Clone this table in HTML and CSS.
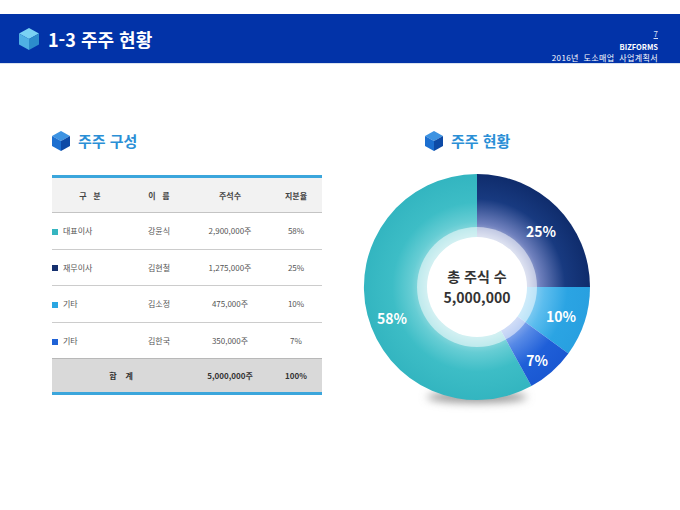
FILE: index.html
```html
<!DOCTYPE html>
<html lang="ko">
<head>
<meta charset="utf-8">
<title>1-3 주주 현황</title>
<link rel="stylesheet" href="styles.css">
</head>
<body>
<div class="page">
  <header class="topbar">
    <div class="brand">
      <svg class="cube cube-lg" viewBox="0 0 22 24" aria-hidden="true">
        <polygon points="11,1 21,6.5 11,12 1,6.5" fill="#7ad2f3"/>
        <polygon points="1,6.5 11,12 11,23 1,17.5" fill="#4fb0e4"/>
        <polygon points="21,6.5 11,12 11,23 21,17.5" fill="#2c8ccc"/>
      </svg>
      <h1 class="title">1-3 주주 현황</h1>
    </div>
    <div class="meta">
      <span class="pageno">7</span>
      <span class="company">BIZFORMS</span>
      <span class="doc">2016년 도소매업 사업계획서</span>
    </div>
  </header>

  <main class="content">
    <section class="panel panel-left">
      <div class="sec-title">
        <svg class="cube" viewBox="0 0 20 22" aria-hidden="true">
          <polygon points="10,1 19,6 10,11 1,6" fill="#3d93e2"/>
          <polygon points="1,6 10,11 10,21 1,16" fill="#1c6fd0"/>
          <polygon points="19,6 10,11 10,21 19,16" fill="#0d4aa6"/>
        </svg>
        <h2>주주 구성</h2>
      </div>
      <table class="share-table">
        <colgroup>
          <col class="c1"><col class="c2"><col class="c3"><col class="c4">
        </colgroup>
        <thead>
          <tr><th>구&nbsp;&nbsp;&nbsp;분</th><th>이&nbsp;&nbsp;&nbsp;름</th><th>주석수</th><th>지분율</th></tr>
        </thead>
        <tbody>
          <tr><td class="lbl"><i class="mk mk-teal"></i>대표이사</td><td>강윤식</td><td>2,900,000주</td><td>58%</td></tr>
          <tr><td class="lbl"><i class="mk mk-navy"></i>재무이사</td><td>김현철</td><td>1,275,000주</td><td>25%</td></tr>
          <tr><td class="lbl"><i class="mk mk-sky"></i>기타</td><td>김소정</td><td>475,000주</td><td>10%</td></tr>
          <tr><td class="lbl"><i class="mk mk-blue"></i>기타</td><td>김한국</td><td>350,000주</td><td>7%</td></tr>
        </tbody>
        <tfoot>
          <tr><td colspan="2">합&nbsp;&nbsp;&nbsp;&nbsp;계</td><td>5,000,000주</td><td>100%</td></tr>
        </tfoot>
      </table>
    </section>

    <section class="panel panel-right">
      <div class="sec-title sec-title-right">
        <svg class="cube" viewBox="0 0 20 22" aria-hidden="true">
          <polygon points="10,1 19,6 10,11 1,6" fill="#3d93e2"/>
          <polygon points="1,6 10,11 10,21 1,16" fill="#1c6fd0"/>
          <polygon points="19,6 10,11 10,21 19,16" fill="#0d4aa6"/>
        </svg>
        <h2>주주 현황</h2>
      </div>
      <svg class="donut" viewBox="0 0 240 246" width="240" height="246">
        <defs>
          <radialGradient id="gNavy" gradientUnits="userSpaceOnUse" cx="120" cy="120" r="113">
            <stop offset="0.45" stop-color="#b7c0e0"/>
            <stop offset="0.56" stop-color="#6f80bd"/>
            <stop offset="0.78" stop-color="#183a80"/>
            <stop offset="1" stop-color="#0f2c6c"/>
          </radialGradient>
          <radialGradient id="gSky" gradientUnits="userSpaceOnUse" cx="120" cy="120" r="113">
            <stop offset="0.45" stop-color="#9ad6f5"/>
            <stop offset="0.6" stop-color="#5cbdee"/>
            <stop offset="0.8" stop-color="#2ba4e3"/>
            <stop offset="1" stop-color="#28a0e0"/>
          </radialGradient>
          <radialGradient id="gBlue" gradientUnits="userSpaceOnUse" cx="120" cy="120" r="113">
            <stop offset="0.45" stop-color="#9fb8ef"/>
            <stop offset="0.6" stop-color="#5689e6"/>
            <stop offset="0.8" stop-color="#1f5fd8"/>
            <stop offset="1" stop-color="#1a58d2"/>
          </radialGradient>
          <radialGradient id="gTeal" gradientUnits="userSpaceOnUse" cx="120" cy="120" r="113">
            <stop offset="0.45" stop-color="#a2e0e4"/>
            <stop offset="0.58" stop-color="#66cdd4"/>
            <stop offset="0.75" stop-color="#3dbdc6"/>
            <stop offset="1" stop-color="#33b5c0"/>
          </radialGradient>
          <filter id="blur" x="-30%" y="-100%" width="160%" height="300%">
            <feGaussianBlur stdDeviation="4"/>
          </filter>
        </defs>
        <ellipse cx="120" cy="230" rx="50" ry="6" fill="#999999" filter="url(#blur)"/>
        <path d="M120 120 L174.4 219 A113 113 0 1 1 120 7 Z" fill="url(#gTeal)"/>
        <path d="M120 120 L120 7 A113 113 0 0 1 233 120 Z" fill="url(#gNavy)"/>
        <path d="M120 120 L233 120 A113 113 0 0 1 211.4 186.4 Z" fill="url(#gSky)"/>
        <path d="M120 120 L211.4 186.4 A113 113 0 0 1 174.4 219 Z" fill="url(#gBlue)"/>
        <circle cx="120" cy="120" r="60" fill="#ffffff" fill-opacity="0.5"/>
        <circle cx="120" cy="120" r="50" fill="#ffffff"/>
        <text class="seg" x="184" y="64">25%</text>
        <text class="seg" x="204" y="149">10%</text>
        <text class="seg" x="180" y="193">7%</text>
        <text class="seg" x="35" y="151">58%</text>
        <text class="center" x="120" y="109">총 주식 수</text>
        <text class="center" x="120" y="129.5">5,000,000</text>
      </svg>
    </section>
  </main>
</div>
</body>
</html>
```

FILE: styles.css
```css
* { box-sizing: border-box; }

html, body {
  margin: 0;
  padding: 0;
  background: #ffffff;
}

body {
  font-family: "Noto Sans CJK KR", "Noto Sans", "Liberation Sans", sans-serif;
  color: #555555;
}

.page {
  width: 680px;
  height: 510px;
  overflow: hidden;
  background: #ffffff;
}

/* ---------- top bar ---------- */
.topbar {
  margin-top: 14px;
  height: 50px;
  background: #0233a8;
  border-bottom: 1px solid #d9e2ef;
  display: flex;
  justify-content: space-between;
  padding: 0 22px 0 18px;
}

.brand {
  display: flex;
  align-items: center;
  gap: 8px;
}

.cube {
  width: 20px;
  height: 22px;
  display: block;
  flex: none;
}

.cube-lg {
  width: 22px;
  height: 24px;
}

.title {
  margin: 0;
  color: #ffffff;
  font-size: 18px;
  font-weight: 700;
  line-height: 24px;
}

.meta {
  display: flex;
  flex-direction: column;
  align-items: flex-end;
  padding-top: 14px;
  color: #ffffff;
  font-size: 8px;
  line-height: 11px;
}

.pageno {
  text-decoration: underline;
  color: #d6def5;
}

.company {
  margin-top: 2px;
  font-weight: 700;
  font-size: 7.5px;
}

.doc {
  letter-spacing: 0.4px;
  word-spacing: 2px;
}

/* ---------- content ---------- */
.content {
  display: flex;
  gap: 35px;
  padding-top: 66px;
  padding-left: 52px;
}

.panel-left {
  width: 270px;
}

.panel-right {
  width: 240px;
}

.sec-title {
  display: flex;
  align-items: center;
  gap: 7px;
  height: 22px;
  margin-left: -1px;
}

.sec-title h2 {
  margin: 0;
  font-size: 15px;
  font-weight: 700;
  color: #2b8fd6;
  line-height: 22px;
}

.sec-title-right {
  padding-left: 68px;
}

/* ---------- table ---------- */
.share-table {
  margin-top: 23px;
  width: 270px;
  border-collapse: collapse;
  table-layout: fixed;
  font-size: 8px;
  border-top: 3px solid #3ba6dc;
  border-bottom: 3px solid #3ba6dc;
}

.share-table col.c1 { width: 76px; }
.share-table col.c2 { width: 62px; }
.share-table col.c3 { width: 80px; }
.share-table col.c4 { width: 52px; }

.share-table th {
  height: 36px;
  background: #f2f2f2;
  color: #444444;
  font-weight: 700;
  text-align: center;
  padding: 0;
  border-bottom: 1px solid #c4c4c4;
}

.share-table td {
  height: 36.6px;
  text-align: center;
  padding: 0;
  color: #555555;
  border-bottom: 1px solid #cccccc;
}

.share-table td.lbl {
  text-align: left;
}

.share-table tbody tr:last-child td {
  border-bottom: 1px solid #b8b8b8;
}

.share-table tfoot td {
  height: 35px;
  background: #d9d9d9;
  color: #333333;
  font-weight: 700;
  border-bottom: none;
}

.mk {
  display: inline-block;
  width: 6px;
  height: 6px;
  margin-right: 5px;
  vertical-align: -0.5px;
}

.mk-teal { background: #35b5c0; }
.mk-navy { background: #15306e; }
.mk-sky  { background: #2aa6e2; }
.mk-blue { background: #1f62d6; }

/* ---------- donut ---------- */
.donut {
  display: block;
  margin-top: 15px;
}

.donut text {
  font-family: "Noto Sans CJK KR", "Noto Sans", sans-serif;
  font-weight: 700;
  text-anchor: middle;
  dominant-baseline: central;
}

.donut .seg {
  fill: #ffffff;
  font-size: 14px;
}

.donut .center {
  fill: #333333;
  font-size: 14px;
}
```
